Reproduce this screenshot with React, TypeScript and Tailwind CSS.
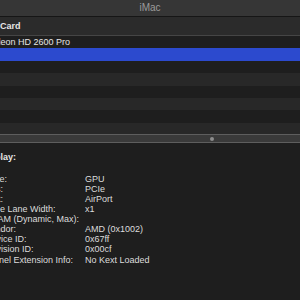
import React from "react";

const rows = [
  { bg: "bg-[#1e1e1e]", text: "Radeon HD 2600 Pro" },
  { bg: "bg-[#2c4ace]", text: "" },
  { bg: "bg-[#1e1e1e]", text: "" },
  { bg: "bg-[#282828]", text: "" },
  { bg: "bg-[#1e1e1e]", text: "" },
  { bg: "bg-[#282828]", text: "" },
  { bg: "bg-[#1e1e1e]", text: "" },
  { bg: "bg-[#282828]", text: "" },
];

const details: [string, string][] = [
  ["Type:", "GPU"],
  ["Bus:", "PCIe"],
  ["Slot:", "AirPort"],
  ["PCIe Lane Width:", "x1"],
  ["VRAM (Dynamic, Max):", ""],
  ["Vendor:", "AMD (0x1002)"],
  ["Device ID:", "0x67ff"],
  ["Revision ID:", "0x00cf"],
  ["Kernel Extension Info:", "No Kext Loaded"],
];

export default function App() {
  return (
    <div
      className="w-[300px] h-[300px] overflow-hidden bg-[#1e1e1e] flex flex-col"
      style={{ fontFamily: '"Liberation Sans", Arial, sans-serif' }}
    >
      <div className="h-[17px] shrink-0 bg-[#363636] border-b border-[#161616] flex items-center justify-center">
        <span className="text-[10px] text-[#9b9b9b] leading-none">iMac</span>
      </div>
      <div className="h-[19px] shrink-0 bg-[#2b2b2b] border-b border-[#454545] flex items-center">
        <span className="text-[9px] font-bold text-[#e6e6e6] leading-none whitespace-nowrap">Card</span>
      </div>
      <div className="h-[98px] shrink-0 overflow-hidden flex flex-col">
        {rows.map((r, i) => (
          <div key={i} className={`h-[12.4px] shrink-0 ${r.bg} flex items-center`}>
            {r.text && (
              <span className="ml-[-16px] text-[9px] text-[#e4e4e4] leading-none whitespace-nowrap">
                {r.text}
              </span>
            )}
          </div>
        ))}
      </div>
      <div className="h-[9px] shrink-0 bg-[#3a3a3a] border-y border-[#5e5e5e] flex items-center">
        <div className="ml-[210px] w-[4px] h-[4px] rounded-full bg-[#8c8c8c]" />
      </div>
      <div className="flex-1 bg-[#1e1e1e] pt-[8.5px] text-[9px] leading-[10.1px] text-[#dcdcdc] whitespace-nowrap">
        <div className="ml-[-19px] font-bold text-[#e6e6e6]">Display:</div>
        <div className="mt-[12.2px] flex flex-col">
          {details.map(([k, v]) => (
            <div key={k} className="flex">
              <span className="ml-[-15px] w-[100px] shrink-0">{k}</span>
              <span>{v}</span>
            </div>
          ))}
        </div>
      </div>
    </div>
  );
}
